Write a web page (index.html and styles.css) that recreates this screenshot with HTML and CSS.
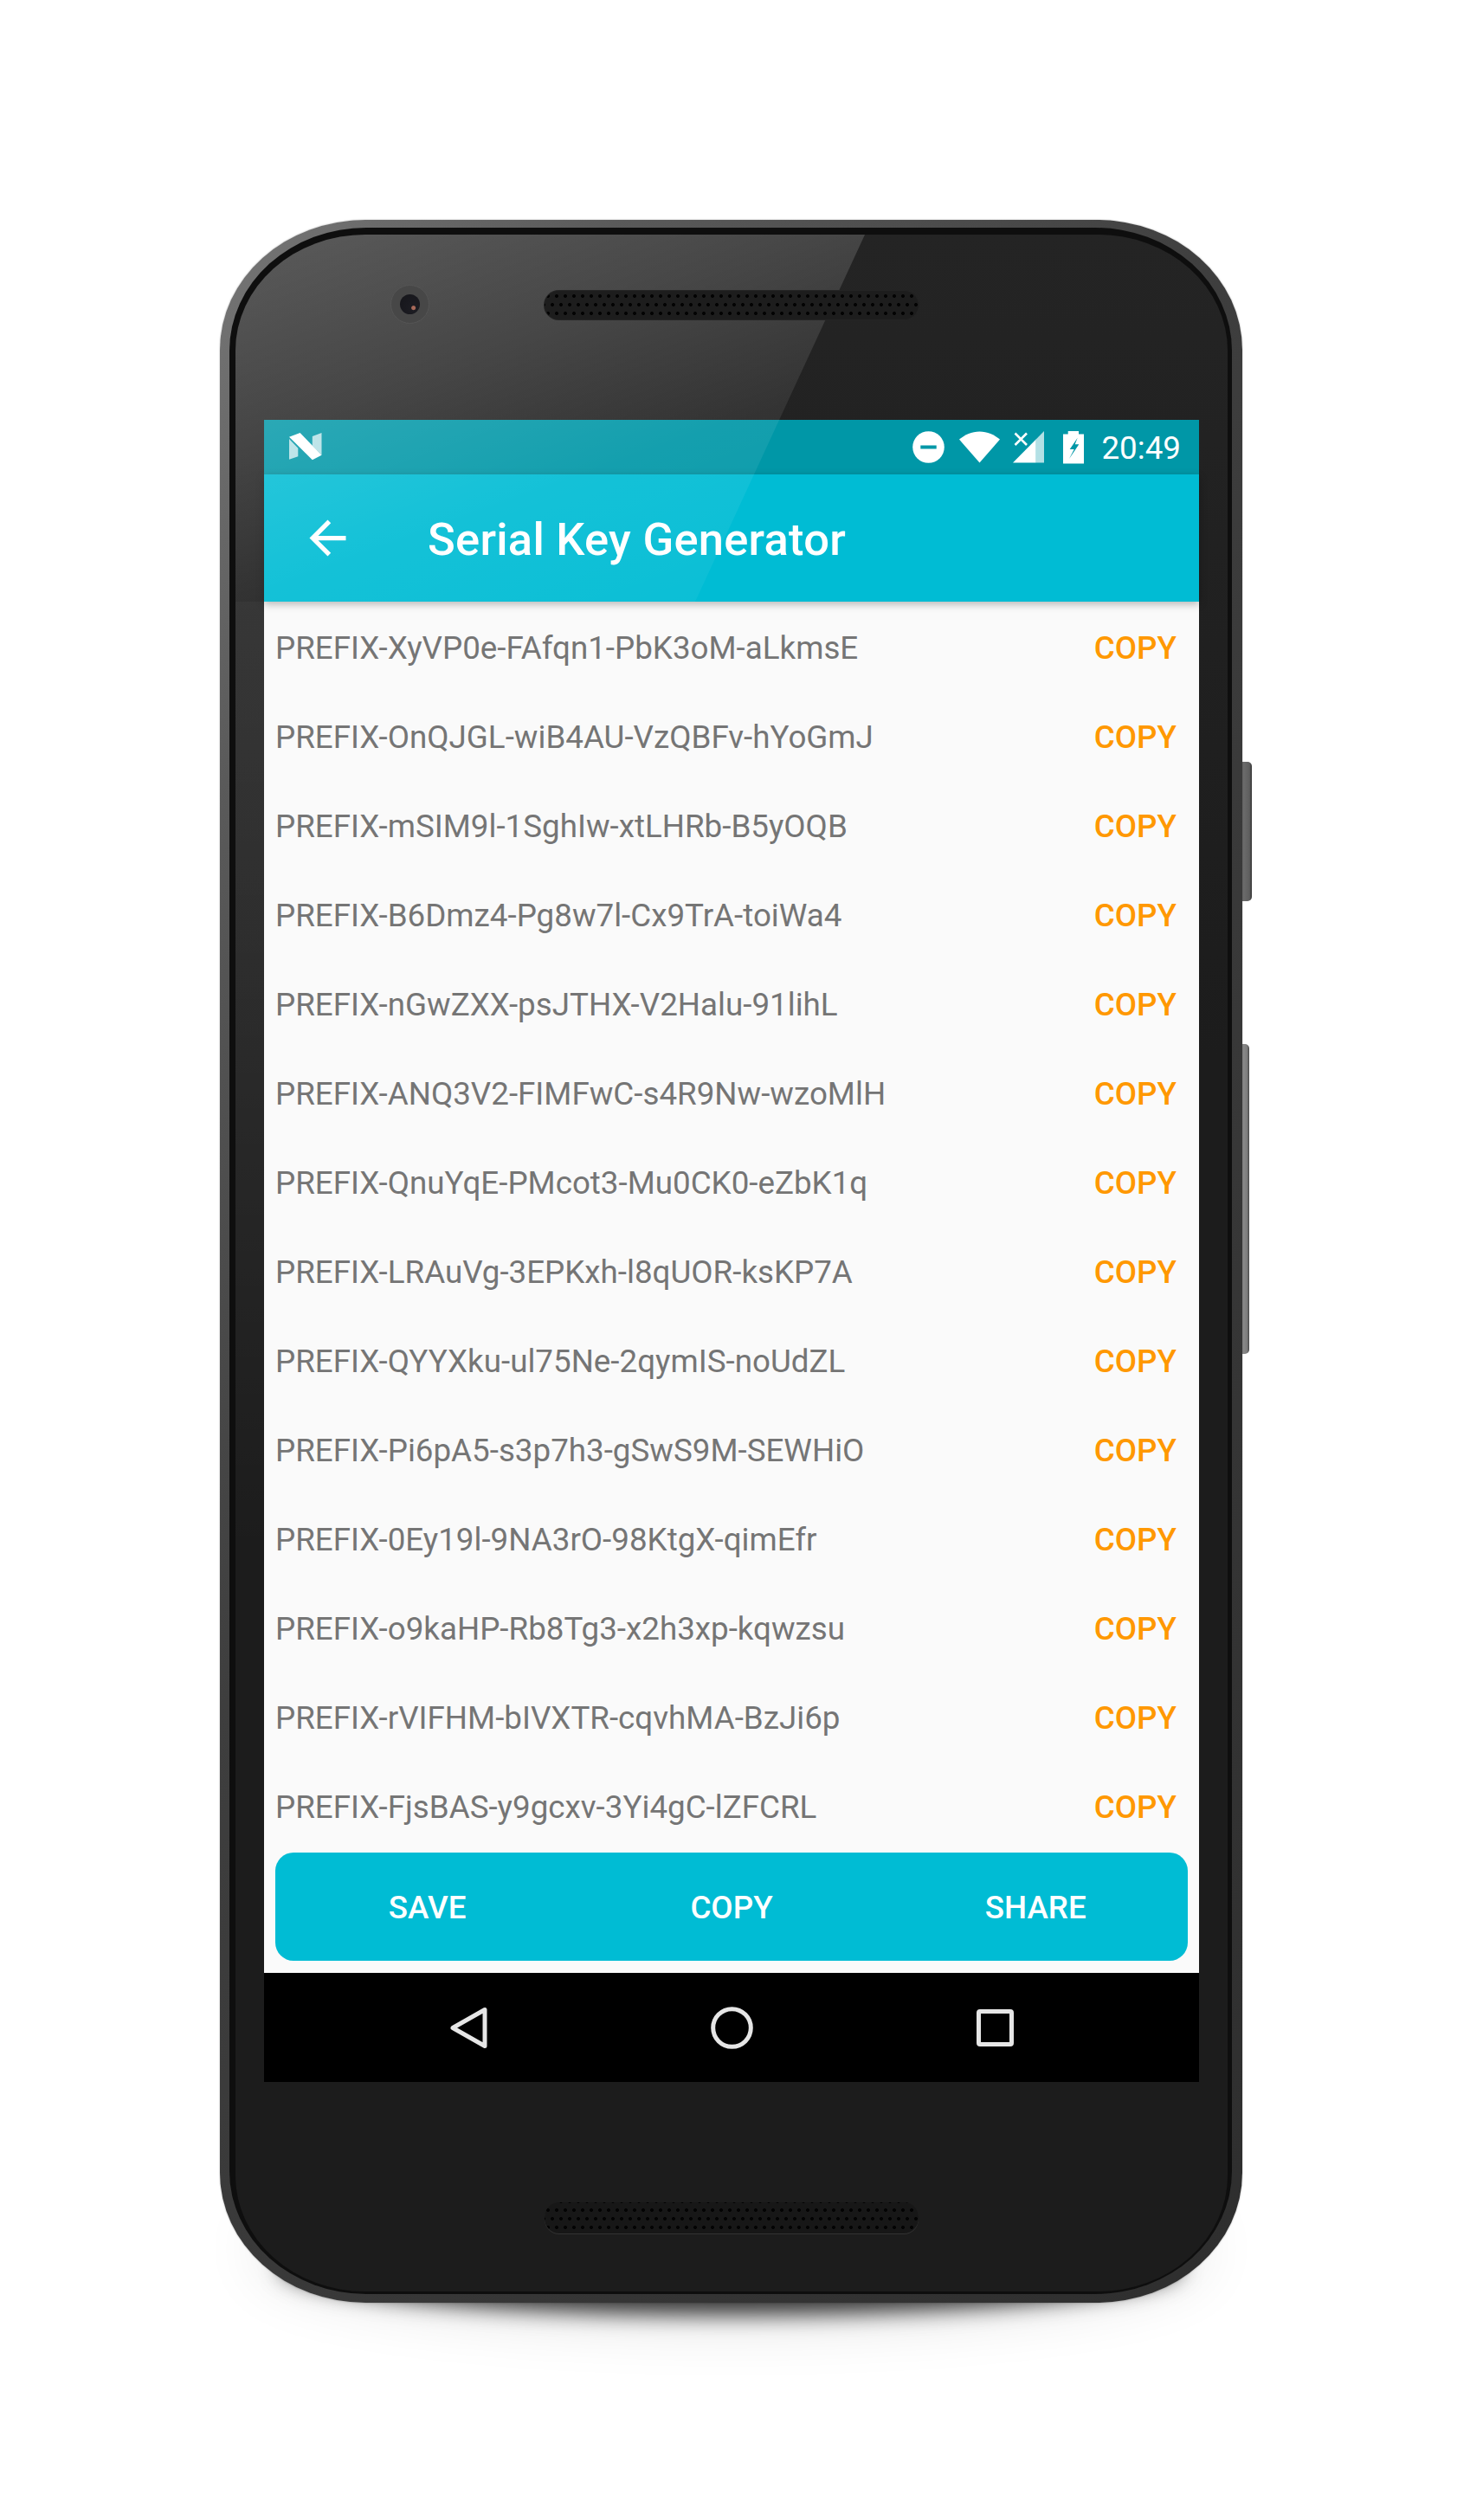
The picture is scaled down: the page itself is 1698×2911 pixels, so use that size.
FILE: index.html
```html
<!DOCTYPE html>
<html lang="en">
<head>
    <meta charset="UTF-8">
    <title>Serial Key Generator</title>
    <link rel="stylesheet" href="styles.css">
</head>
<body>

    <div class="phone">
        <div class="floor-shadow"></div>
        <div class="side-button power"></div>
        <div class="side-button volume"></div>

        <div class="bezel">
            <div class="face">
                <div class="camera"><span class="lens"></span></div>
                <div class="speaker"></div>

                <div class="screen">
                    <div class="status-bar">
                        <svg class="n-logo" viewBox="0 0 38 32">
                            <path class="soft" d="M0 7l10.3 10.7v9.6L0 30.7zM37.5 0v25.7L26.8 15V4z"/>
                            <path d="M0 4.7L12.6 0l24.9 25.7-10.7 5.6z"/>
                        </svg>
                        <div class="status-icons">
                            <svg class="ic-dnd" viewBox="0 0 37 37">
                                <circle cx="18.5" cy="18.5" r="18.3"/>
                                <rect class="cut" x="9.3" y="16.5" width="18.4" height="4"/>
                            </svg>
                            <svg class="ic-wifi" viewBox="0 0 47 37">
                                <path d="M23.5 36.6L0 9.6C6.5 4 14.5 0.4 23.5 0.4S40.5 4 47 9.6z"/>
                            </svg>
                            <svg class="ic-signal" viewBox="0 0 36 37">
                                <path class="soft" d="M36 0v36.5H26.7V9.5z"/>
                                <path d="M0 36.5L26.7 9.5v27z"/>
                                <path class="cross" d="M2.5 2.5L16 16M16 2.5L2.5 16"/>
                            </svg>
                            <svg class="ic-battery" viewBox="0 0 24 38">
                                <path d="M5.7 0h12.3v3.6H24V37.5H0V3.6h5.7z"/>
                                <path class="cut" d="M16.7 7.7L7.7 21h5L7 32l11.3-16.7h-4.6z"/>
                            </svg>
                            <span class="clock">20:49</span>
                        </div>
                    </div>

                    <header class="toolbar">
                        <svg class="back-arrow" viewBox="0 0 24 24"><path d="M20 11H7.83l5.59-5.59L12 4l-8 8 8 8 1.41-1.41L7.83 13H20v-2z"/></svg>
                        <h1 class="toolbar-title">Serial Key Generator</h1>
                    </header>

                    <main class="content">
                        <ul id="key-list" class="key-list"></ul>
                        <div class="action-bar">
                            <button class="action-btn">SAVE</button>
                            <button class="action-btn">COPY</button>
                            <button class="action-btn">SHARE</button>
                        </div>
                    </main>

                    <nav class="nav-bar">
                        <div class="nav-cell">
                            <svg viewBox="0 0 63 63"><path d="M13 31.5L50 10.5v42z"/></svg>
                        </div>
                        <div class="nav-cell">
                            <svg viewBox="0 0 63 63"><circle cx="31.5" cy="31.5" r="21.8"/></svg>
                        </div>
                        <div class="nav-cell">
                            <svg viewBox="0 0 63 63"><rect x="12.5" y="12.5" width="38" height="38" rx="1.5"/></svg>
                        </div>
                    </nav>
                </div>

                <div class="speaker speaker-bottom"></div>
                <div class="glare"></div>
            </div>
        </div>
    </div>

    <script>
        const keys = [
            "PREFIX-XyVP0e-FAfqn1-PbK3oM-aLkmsE",
            "PREFIX-OnQJGL-wiB4AU-VzQBFv-hYoGmJ",
            "PREFIX-mSIM9l-1SghIw-xtLHRb-B5yOQB",
            "PREFIX-B6Dmz4-Pg8w7l-Cx9TrA-toiWa4",
            "PREFIX-nGwZXX-psJTHX-V2Halu-91lihL",
            "PREFIX-ANQ3V2-FIMFwC-s4R9Nw-wzoMlH",
            "PREFIX-QnuYqE-PMcot3-Mu0CK0-eZbK1q",
            "PREFIX-LRAuVg-3EPKxh-l8qUOR-ksKP7A",
            "PREFIX-QYYXku-ul75Ne-2qymIS-noUdZL",
            "PREFIX-Pi6pA5-s3p7h3-gSwS9M-SEWHiO",
            "PREFIX-0Ey19l-9NA3rO-98KtgX-qimEfr",
            "PREFIX-o9kaHP-Rb8Tg3-x2h3xp-kqwzsu",
            "PREFIX-rVIFHM-bIVXTR-cqvhMA-BzJi6p",
            "PREFIX-FjsBAS-y9gcxv-3Yi4gC-lZFCRL"
        ];

        const list = document.getElementById('key-list');

        keys.forEach(key => {
            const row = document.createElement('li');
            row.className = 'key-row';
            row.innerHTML = `
                <span class="key-text">${key}</span>
                <span class="key-copy">COPY</span>
            `;
            list.appendChild(row);
        });
    </script>

</body>
</html>
```

FILE: styles.css
```css
:root {
    --cyan: #00bcd4;
    --cyan-dark: #0097a7;
    --orange: #ff9800;
    --text-grey: #757575;
    --list-bg: #fafafa;
    --face: #1c1c1c;
}

* {
    margin: 0;
    padding: 0;
    box-sizing: border-box;
}

body {
    font-family: Roboto, "Liberation Sans", sans-serif;
    background-color: #fff;
    height: 2911px;
    overflow: hidden;
}

/* phone shell */
.phone {
    position: relative;
    width: 1181px;
    height: 2406px;
    margin: 254px 0 0 254px;
    padding: 9px 12px 10px 11px;
    border-radius: 168px / 150px;
    background: linear-gradient(125deg, #767676 0%, #5a5a5a 16%, #3e3e3e 42%, #2e2e2e 100%);
    box-shadow: 0 0 2px rgba(0, 0, 0, 0.35);
}

.floor-shadow {
    position: absolute;
    z-index: -1;
    left: 70px;
    right: 70px;
    bottom: 8px;
    height: 110px;
    border-radius: 50%;
    box-shadow: 0 22px 24px rgba(0, 0, 0, 0.75), 0 0 75px 22px rgba(0, 0, 0, 0.16);
}

.side-button {
    position: absolute;
    z-index: -1;
    left: 100%;
    border-radius: 0 5px 5px 0;
}

.power {
    top: 626px;
    width: 11px;
    height: 161px;
    background: linear-gradient(90deg, #6e6e6e, #5e5e5e 75%, #333);
}

.volume {
    top: 952px;
    width: 8px;
    height: 358px;
    background: linear-gradient(90deg, #8e8e8e, #7c7c7c 70%, #444);
}

.bezel {
    height: 100%;
    padding: 8px 5px 3px 7px;
    border-radius: 158px / 142px;
    background-color: #0e0e0e;
}

.face {
    position: relative;
    height: 100%;
    display: flex;
    flex-direction: column;
    align-items: center;
    overflow: hidden;
    border-radius: 150px / 134px;
    background: linear-gradient(180deg, #242424, var(--face) 40%);
}

/* the left strip keeps a little of the reflection below the toolbar */
.face::before {
    content: "";
    position: absolute;
    top: 424px;
    left: 0;
    width: 33px;
    height: 1100px;
    background: linear-gradient(180deg, rgba(255, 255, 255, 0.1), rgba(255, 255, 255, 0.07) 40%, rgba(255, 255, 255, 0));
}

.glare {
    position: absolute;
    z-index: 2;
    top: 0;
    left: 0;
    width: 727px;
    height: 424px;
    clip-path: polygon(0 0, 727px 0, 531px 424px, 0 424px);
    background: linear-gradient(160deg, rgba(255, 255, 255, 0.25) 0%, rgba(255, 255, 255, 0.16) 35%, rgba(255, 255, 255, 0.08) 62%, rgba(255, 255, 255, 0.03) 100%);
    pointer-events: none;
}

.camera {
    position: absolute;
    z-index: 3;
    top: 58px;
    left: 179px;
    width: 45px;
    height: 45px;
    display: flex;
    justify-content: center;
    align-items: center;
    border-radius: 50%;
    background-color: #474747;
    border: 1px solid #555;
}

.lens {
    width: 23px;
    height: 23px;
    border-radius: 50%;
    background: radial-gradient(circle at 68% 68%, #a8695a 0, #a8695a 2px, #1c1c22 3px, #15151a 100%);
}

.speaker {
    position: relative;
    z-index: 3;
    width: 432px;
    height: 33px;
    margin-top: 65px;
    flex-shrink: 0;
    border-radius: 17px;
    background-color: #1d1d1d;
    background-image:
        radial-gradient(circle, #030303 1.7px, transparent 2.3px),
        radial-gradient(circle, #030303 1.7px, transparent 2.3px);
    background-size: 10px 20px;
    background-position: 9px -4px, 14px 6px;
    box-shadow: 0 0 0 1px #242424;
}

.speaker-bottom {
    height: 36px;
    margin-top: 139px;
    background-color: #171717;
    background-position: 9px -1px, 14px 9px;
    box-shadow: 0 1px 0 #333;
}

/* device screen */
.screen {
    width: 1080px;
    height: 1920px;
    margin-top: 116px;
    flex-shrink: 0;
    display: flex;
    flex-direction: column;
}

.status-bar {
    height: 63px;
    padding: 0 21px 0 29px;
    display: flex;
    justify-content: space-between;
    align-items: center;
    background-color: var(--cyan-dark);
    color: #fff;
    fill: #fff;
}

.n-logo {
    width: 38px;
    height: 32px;
    margin-top: -2px;
}

.soft {
    opacity: 0.7;
}

.cut {
    fill: var(--cyan-dark);
}

.status-icons {
    display: flex;
    align-items: center;
}

.ic-dnd {
    width: 37px;
    height: 37px;
    margin-right: 17px;
}

.ic-wifi {
    width: 47px;
    height: 37px;
    margin-right: 15px;
}

.ic-signal {
    width: 36px;
    height: 37px;
    margin-right: 22px;
}

.cross {
    fill: none;
    stroke: #fff;
    stroke-width: 2.6;
}

.ic-battery {
    width: 24px;
    height: 38px;
    margin-right: 20px;
}

.clock {
    padding-top: 2px;
    font-size: 36.75px;
    line-height: 61px;
}

.toolbar {
    position: relative;
    z-index: 1;
    height: 147px;
    padding-left: 42px;
    display: flex;
    align-items: center;
    background-color: var(--cyan);
    box-shadow: 0 3px 9px rgba(0, 0, 0, 0.28);
}

.back-arrow {
    width: 63px;
    height: 63px;
    margin-right: 84px;
    fill: #fff;
}

.toolbar-title {
    padding-top: 3px;
    font-size: 52.5px;
    font-weight: 500;
    letter-spacing: 0.25px;
    color: #fff;
}

.content {
    flex: 1;
    padding: 2px 13px 14px;
    display: flex;
    flex-direction: column;
    justify-content: space-between;
    background-color: var(--list-bg);
}

.key-list {
    list-style: none;
}

.key-row {
    height: 103px;
    display: flex;
    justify-content: space-between;
    align-items: center;
    font-size: 36.75px;
}

.key-text {
    color: var(--text-grey);
}

.key-copy {
    margin-right: 13px;
    font-weight: 500;
    color: var(--orange);
}

.action-bar {
    height: 125px;
    display: grid;
    grid-template-columns: repeat(3, 1fr);
    border-radius: 21px;
    background-color: var(--cyan);
}

.action-btn {
    padding-top: 2px;
    border: none;
    background: none;
    font-family: inherit;
    font-size: 36.75px;
    font-weight: 500;
    color: #fff;
}

.nav-bar {
    height: 126px;
    display: flex;
    justify-content: center;
    background-color: #000;
}

.nav-cell {
    width: 304px;
    display: flex;
    justify-content: center;
    align-items: center;
}

.nav-cell svg {
    width: 63px;
    height: 63px;
    fill: none;
    stroke: #e6e6e6;
    stroke-width: 5;
    stroke-linejoin: round;
}
```
